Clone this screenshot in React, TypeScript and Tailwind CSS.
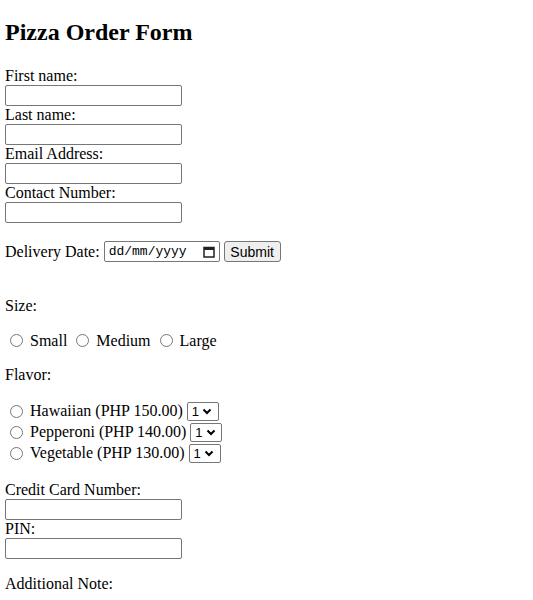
const textBox =
	'block w-[177px] h-[21px] border border-[#767676] rounded-[2px] bg-white';

function Field({ label }: { label: string }) {
	return (
		<>
			<div className="h-[18px] leading-[18px]">{label}</div>
			<div className="h-[21px]">
				<input type="text" className={textBox} />
			</div>
		</>
	);
}

function Radio() {
	return (
		<span className="inline-block w-[13px] h-[13px] rounded-full border border-[#767676] bg-white ml-[5px] mr-[7px] shrink-0" />
	);
}

function Chevron() {
	return (
		<svg width="10" height="7" viewBox="0 0 10 7" className="ml-[3px]">
			<path d="M1.5 1.5 L5 5 L8.5 1.5" fill="none" stroke="#000" strokeWidth="2" />
		</svg>
	);
}

function Qty() {
	return (
		<span className="inline-flex items-center h-[19px] w-[32px] ml-[4px] pl-[4px] border border-[#767676] rounded-[2px] bg-white font-['Liberation_Sans'] text-[13px] leading-none">
			1
			<Chevron />
		</span>
	);
}

const flavors = [
	'Hawaiian (PHP 150.00)',
	'Pepperoni (PHP 140.00)',
	'Vegetable (PHP 130.00)',
];

export default function App() {
	return (
		<div className="pl-[5px] bg-white text-black font-['Liberation_Serif',serif] text-[16px] min-h-[600px]">
			<h2 className="pt-[19px] pb-[20px] text-[24px] font-bold leading-[27.6px]">
				Pizza Order Form
			</h2>
			<Field label="First name:" />
			<Field label="Last name:" />
			<Field label="Email Address:" />
			<Field label="Contact Number:" />
			<div className="h-[18px]" />
			<div className="flex items-center h-[22px]">
				<span className="mr-[4px]">Delivery Date:</span>
				<span className="inline-flex items-center justify-between w-[116px] h-[21px] px-[4px] border border-[#767676] rounded-[2px] bg-white font-['Liberation_Mono',monospace] text-[13px]">
					dd/mm/yyyy
					<svg width="12" height="12" viewBox="0 0 12 12">
						<rect x="1" y="1.5" width="10" height="9.5" fill="none" stroke="#222" strokeWidth="1.5" />
						<rect x="1" y="1" width="10" height="3" fill="#222" />
					</svg>
				</span>
				<button className="ml-[4px] h-[21px] w-[57px] border border-[#767676] rounded-[3px] bg-[#efefef] font-['Liberation_Sans'] text-[14px] leading-none">
					Submit
				</button>
			</div>
			<div className="h-[18px]" />
			<div className="h-[16px]" />
			<div className="h-[18px] leading-[18px]">Size:</div>
			<div className="h-[17px]" />
			<div className="flex items-center h-[18px]">
				<Radio />
				<span>Small</span>
				<span className="ml-[4px]" />
				<Radio />
				<span>Medium</span>
				<span className="ml-[4px]" />
				<Radio />
				<span>Large</span>
			</div>
			<div className="h-[16px]" />
			<div className="h-[18px] leading-[18px]">Flavor:</div>
			<div className="h-[17px]" />
			{flavors.map((f) => (
				<div key={f} className="flex items-center h-[21px]">
					<Radio />
					<span>{f}</span>
					<Qty />
				</div>
			))}
			<div className="h-[17px]" />
			<Field label="Credit Card Number:" />
			<Field label="PIN:" />
			<div className="h-[16px]" />
			<div className="h-[18px] leading-[18px]">Additional Note:</div>
		</div>
	);
}
